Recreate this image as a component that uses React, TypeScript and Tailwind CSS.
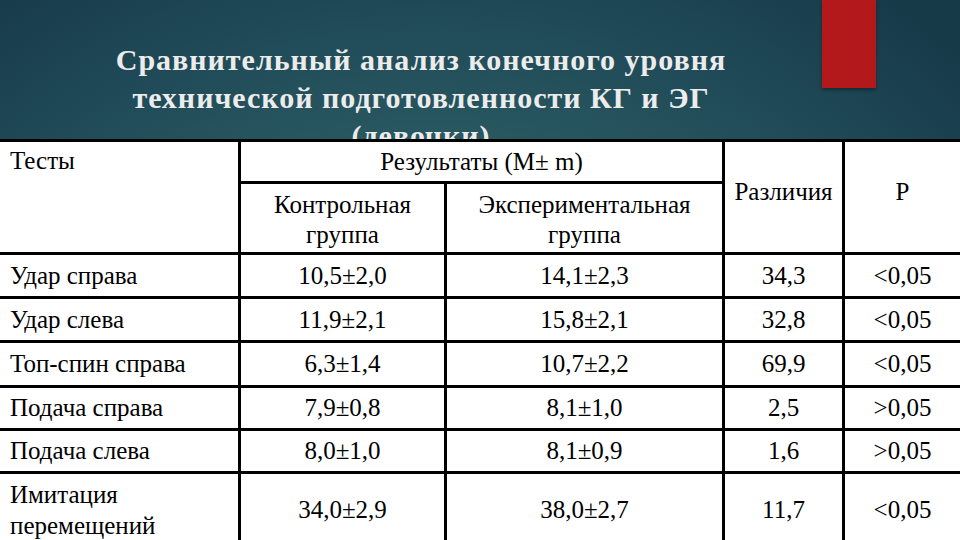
import React from "react";

const rows: string[][] = [
  ["Удар справа", "10,5±2,0", "14,1±2,3", "34,3", "<0,05"],
  ["Удар слева", "11,9±2,1", "15,8±2,1", "32,8", "<0,05"],
  ["Топ-спин справа", "6,3±1,4", "10,7±2,2", "69,9", "<0,05"],
  ["Подача справа", "7,9±0,8", "8,1±1,0", "2,5", ">0,05"],
  ["Подача слева", "8,0±1,0", "8,1±0,9", "1,6", ">0,05"],
];

export default function App() {
  return (
    <div className="relative w-[960px] h-[540px] overflow-hidden flex flex-col font-['Liberation_Serif'] bg-[radial-gradient(ellipse_75%_110%_at_45%_85%,#407779_0%,#2f6267_38%,#214c59_72%,#173a49_100%)]">
      <div className="absolute left-[822px] top-0 w-[54px] h-[88px] bg-[#b3191b] shadow-[0_2px_3px_rgba(0,0,0,0.35)]" />
      <div className="h-[139px] shrink-0 flex">
        <div className="w-[842px] pt-[41px] text-center text-[#ececec] font-bold text-[30px] leading-[38px] tracking-[1px] whitespace-nowrap">
          Сравнительный анализ конечного уровня
          <br />
          технической подготовленности КГ и ЭГ
          <br />
          (девочки)
        </div>
      </div>
      <div className="relative z-10 grid grid-cols-[238px_203px_275px_117px_1fr] grid-rows-[39px_68px_41px_41px_42px_40px_40px_72px] gap-[3px] bg-black pt-[3px] text-black text-[25px] leading-[30px] whitespace-nowrap">
        <div className="row-span-2 bg-white pl-[10px] pt-[4px]">Тесты</div>
        <div className="col-span-2 bg-white flex items-center justify-center">Результаты (M± m)</div>
        <div className="row-span-2 bg-white flex items-center justify-center pb-[10px]">Различия</div>
        <div className="row-span-2 bg-white flex items-center justify-center pb-[10px]">P</div>
        <div className="bg-white flex items-center justify-center text-center pt-[4px]">
          Контрольная
          <br />
          группа
        </div>
        <div className="bg-white flex items-center justify-center text-center pt-[4px]">
          Экспериментальная
          <br />
          группа
        </div>
        {rows.map((r) => (
          <React.Fragment key={r[0]}>
            <div className="bg-white flex items-center pl-[10px]">{r[0]}</div>
            <div className="bg-white flex items-center justify-center">{r[1]}</div>
            <div className="bg-white flex items-center justify-center">{r[2]}</div>
            <div className="bg-white flex items-center justify-center">{r[3]}</div>
            <div className="bg-white flex items-center justify-center">{r[4]}</div>
          </React.Fragment>
        ))}
        <div className="bg-white flex items-center pl-[10px] leading-[31px]">
          Имитация
          <br />
          перемещений
        </div>
        <div className="bg-white flex items-center justify-center">34,0±2,9</div>
        <div className="bg-white flex items-center justify-center">38,0±2,7</div>
        <div className="bg-white flex items-center justify-center">11,7</div>
        <div className="bg-white flex items-center justify-center">&lt;0,05</div>
      </div>
    </div>
  );
}
